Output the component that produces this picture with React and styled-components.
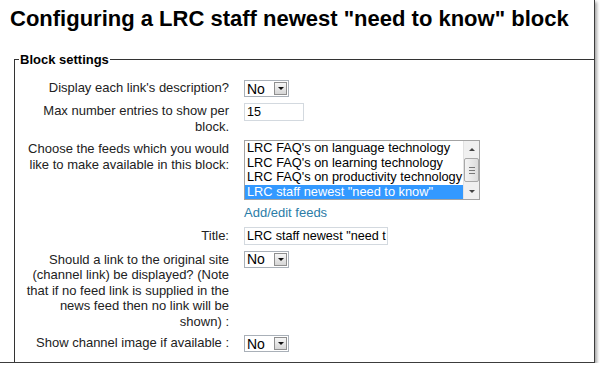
import React from 'react';
import styled, { createGlobalStyle } from 'styled-components';

const GlobalStyle = createGlobalStyle`
  html, body {
    margin: 0;
    padding: 0;
    background: #fff;
  }
  body {
    font-family: "Liberation Sans", Arial, sans-serif;
    color: #1a1a1a;
  }
`;

// --- Styled Components ---
const Frame = styled.div`
  width: 595px;
  height: 363px;
  box-sizing: border-box;
  border-right: 1px solid #3c3c3c;
  border-bottom: 1px solid #3c3c3c;
  box-shadow: 2px 2px 3px rgba(0, 0, 0, 0.35);
  overflow: hidden;
  background: #fff;
`;

const Heading = styled.h2`
  margin: 0;
  padding: 6px 0 0 10px;
  font-size: 22px;
  font-weight: bold;
  line-height: 26px;
  color: #000;
  white-space: nowrap;
`;

const Fieldset = styled.fieldset`
  margin: 20px -4px 0 14px;
  padding: 13px 0 11px 0;
  border: 1px solid #333;
  border-right: none;
  min-width: 0;
`;

const Legend = styled.legend`
  margin-left: 4px;
  padding: 0 1px;
  font-size: 13px;
  font-weight: bold;
  color: #000;
`;

const FormGrid = styled.div`
  display: grid;
  grid-template-columns: 203px 1fr;
  column-gap: 15px;
  row-gap: 6px;
  padding-left: 11px;
`;

const Label = styled.div`
  text-align: right;
  font-size: 13px;
  line-height: 15.5px;
  color: #222;
  padding-top: ${(p) => p.$top || 0}px;
`;

const Control = styled.div`
  display: flex;
  flex-direction: column;
  align-items: flex-start;
`;

const SelectBox = styled.div`
  display: flex;
  align-items: center;
  width: 45px;
  height: 17px;
  box-sizing: border-box;
  border: 1px solid #a9b0b8;
  background: #fff;
  font-size: 14px;
  color: #000;
  padding-left: 2px;
`;

const DropButton = styled.span`
  margin-left: auto;
  margin-right: 1px;
  width: 13px;
  height: 13px;
  box-sizing: border-box;
  border: 1px solid #8f8f8f;
  background: linear-gradient(#f6f6f6, #d6d6d6);
  display: flex;
  align-items: center;
  justify-content: center;

  &::after {
    content: '';
    border-left: 3px solid transparent;
    border-right: 3px solid transparent;
    border-top: 3px solid #111;
  }
`;

const TextInput = styled.div`
  width: ${(p) => p.$width}px;
  height: 18px;
  box-sizing: border-box;
  border: 1px solid #d3d9df;
  background: #fff;
  font-size: 12.6px;
  line-height: 16px;
  padding-left: 2px;
  color: #000;
  white-space: nowrap;
  overflow: hidden;
`;

const ListBox = styled.div`
  display: flex;
  width: 236px;
  height: 60px;
  box-sizing: border-box;
  border: 1px solid #a3a3a3;
  background: #fff;
`;

const Options = styled.div`
  flex: 1;
  min-width: 0;
  overflow: hidden;
`;

const Option = styled.div`
  height: 14.5px;
  font-size: 12.8px;
  line-height: 14.5px;
  padding-left: 2px;
  white-space: nowrap;
  color: ${(p) => (p.$selected ? '#fff' : '#000')};
  background: ${(p) => (p.$selected ? '#3399ff' : 'transparent')};
`;

const ScrollBar = styled.div`
  width: 15px;
  display: flex;
  flex-direction: column;
  background: #f0f0f0;
  border-left: 1px solid #e2e2e2;
`;

const ScrollArrow = styled.div`
  height: 16px;
  display: flex;
  align-items: center;
  justify-content: center;

  &::after {
    content: '';
    border-left: 3px solid transparent;
    border-right: 3px solid transparent;
    ${(p) => (p.$up ? 'border-bottom: 3px solid #444;' : 'border-top: 3px solid #444;')}
  }
`;

const ScrollThumb = styled.div`
  flex: 1;
  margin: 1px 0;
  border: 1px solid #a8a8a8;
  border-radius: 2px;
  background: linear-gradient(90deg, #f4f4f4, #dcdcdc);
  display: flex;
  flex-direction: column;
  align-items: center;
  justify-content: center;
  gap: 2px;
`;

const Grip = styled.span`
  width: 6px;
  height: 1px;
  background: #777;
`;

const FeedLink = styled.a`
  margin-top: 5px;
  font-size: 13px;
  line-height: 15.5px;
  color: #2b7ca7;
  text-decoration: none;
`;

// --- Component ---
const Select = ({ value }) => (
  <SelectBox>
    {value}
    <DropButton />
  </SelectBox>
);

const feeds = [
  "LRC FAQ's on language technology",
  "LRC FAQ's on learning technology",
  "LRC FAQ's on productivity technology",
  'LRC staff newest "need to know"',
];

const App = () => (
  <>
    <GlobalStyle />
    <Frame>
      <Heading>Configuring a LRC staff newest "need to know" block</Heading>
      <Fieldset>
        <Legend>Block settings</Legend>
        <FormGrid>
          <Label $top={0}>Display each link's description?</Label>
          <Control>
            <Select value="No" />
          </Control>

          <Label $top={0}>Max number entries to show per block.</Label>
          <Control>
            <TextInput $width={60}>15</TextInput>
          </Control>

          <Label $top={1}>Choose the feeds which you would like to make available in this block:</Label>
          <Control>
            <ListBox>
              <Options>
                {feeds.map((f, i) => (
                  <Option key={f} $selected={i === feeds.length - 1}>
                    {f}
                  </Option>
                ))}
              </Options>
              <ScrollBar>
                <ScrollArrow $up />
                <ScrollThumb>
                  <Grip />
                  <Grip />
                  <Grip />
                </ScrollThumb>
                <ScrollArrow />
              </ScrollBar>
            </ListBox>
            <FeedLink href="#">Add/edit feeds</FeedLink>
          </Control>

          <Label $top={1}>Title:</Label>
          <Control>
            <TextInput $width={144}>LRC staff newest "need t</TextInput>
          </Control>

          <Label $top={1}>
            Should a link to the original site (channel link) be displayed? (Note that if no feed
            link is supplied in the news feed then no link will be shown) :
          </Label>
          <Control>
            <Select value="No" />
          </Control>

          <Label $top={0}>Show channel image if available :</Label>
          <Control>
            <Select value="No" />
          </Control>
        </FormGrid>
      </Fieldset>
    </Frame>
  </>
);

export default App;
